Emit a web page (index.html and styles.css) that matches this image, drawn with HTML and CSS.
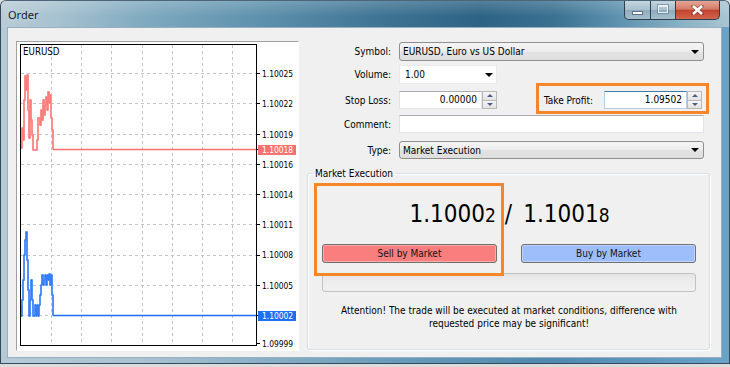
FILE: index.html
```html
<!DOCTYPE html>
<html>
<head>
<meta charset="utf-8">
<title>Order</title>
<link rel="stylesheet" href="styles.css">
</head>
<body>
<div class="window">
  <div class="titlebar">
    <span class="title">Order</span>
    <div class="caption">
      <div class="cbtn min"><span class="min-glyph"></span></div>
      <div class="cbtn max"><span class="max-glyph"></span></div>
      <div class="cbtn close">
        <svg width="13" height="10" viewBox="0 0 13 10"><path d="M2 1 L11 9 M11 1 L2 9" stroke="#3a2a28" stroke-width="4" stroke-linecap="square" opacity="0.35"/><path d="M2 1 L11 9 M11 1 L2 9" stroke="#ffffff" stroke-width="2.4"/></svg>
      </div>
    </div>
  </div>
  <div class="client">
    <div class="chart-panel">
      <svg class="chart" width="281" height="308" viewBox="17 42 281 308">
        <rect x="17" y="42" width="281" height="308" fill="#ffffff"/>
        <g stroke="#c4c4c4" stroke-width="1" stroke-dasharray="3 3" fill="none">
          <path d="M51.5 45 V345 M81.5 45 V345 M111.5 45 V345 M142.5 45 V345 M172.5 45 V345 M202.5 45 V345 M232.5 45 V345"/>
          <path d="M21 73.5 H256 M21 103.5 H256 M21 134.5 H256 M21 164.5 H256 M21 194.5 H256 M21 224.5 H256 M21 255.5 H256 M21 285.5 H256 M21 315.5 H256"/>
        </g>
        <path stroke="#000" stroke-width="1" fill="none" d="M256 73.5 H260 M256 103.5 H260 M256 134.5 H260 M256 149.5 H260 M256 164.5 H260 M256 194.5 H260 M256 224.5 H260 M256 255.5 H260 M256 285.5 H260 M256 315.5 H260 M256 343.5 H260"/>
        <path fill="none" stroke="#ffb4b4" stroke-width="2" d="M21 138 V148 H22 V128 H23 V140 H24 V100 H25 V76 H26 V90 H27 V75 H28 V110 H29 V138 H30 V100 H31 V120 H32 V135 H33 V150 H37 V140 H38 V118 H40 V125 H41 V110 H42 V120 H43 V100 H44 V115 H45 V105 H46 V97 H47 V110 H48 V92 H49 V103 H50 V95 H51 V118 H52 V130 H53 V149.5"/>
        <path fill="none" stroke="#ff6a6a" stroke-width="1" d="M21 138 V148 H22 V128 H23 V140 H24 V100 H25 V76 H26 V90 H27 V75 H28 V110 H29 V138 H30 V100 H31 V120 H32 V135 H33 V150 H37 V140 H38 V118 H40 V125 H41 V110 H42 V120 H43 V100 H44 V115 H45 V105 H46 V97 H47 V110 H48 V92 H49 V103 H50 V95 H51 V118 H52 V130 H53 V149.5"/>
        <line x1="53" y1="149.5" x2="257" y2="149.5" stroke="#ff7070" stroke-width="1.3"/>
        <path fill="none" stroke="#8ab6ff" stroke-width="2" d="M21 305 V316 H22 V300 H23 V280 H24 V255 H25 V240 H26 V232 H27 V260 H28 V290 H29 V316 H30 V300 H31 V280 H32 V300 H33 V316 H35 V305 H36 V316 H37 V305 H38 V316 H39 V305 H40 V295 H41 V285 H42 V275 H43 V285 H44 V280 H45 V275 H46 V285 H47 V275 H48 V280 H49 V274 H50 V285 H51 V275 H52 V295 H53 V315.5"/>
        <path fill="none" stroke="#1a6cf0" stroke-width="1" d="M21 305 V316 H22 V300 H23 V280 H24 V255 H25 V240 H26 V232 H27 V260 H28 V290 H29 V316 H30 V300 H31 V280 H32 V300 H33 V316 H35 V305 H36 V316 H37 V305 H38 V316 H39 V305 H40 V295 H41 V285 H42 V275 H43 V285 H44 V280 H45 V275 H46 V285 H47 V275 H48 V280 H49 V274 H50 V285 H51 V275 H52 V295 H53 V315.5"/>
        <line x1="53" y1="315.5" x2="257" y2="315.5" stroke="#1a6cf0" stroke-width="1.3"/>
        <rect x="20.5" y="44.5" width="236" height="301" fill="none" stroke="#000" stroke-width="1"/>
        <text class="sym" x="23" y="55">EURUSD</text>
        <g class="axis">
          <text x="262" y="76.5">1.10025</text>
          <text x="262" y="107">1.10022</text>
          <text x="262" y="137.5">1.10019</text>
          <text x="262" y="167.5">1.10016</text>
          <text x="262" y="197.5">1.10014</text>
          <text x="262" y="227.5">1.10011</text>
          <text x="262" y="258">1.10008</text>
          <text x="262" y="288.5">1.10005</text>
          <text x="262" y="346.5">1.09999</text>
        </g>
        <rect x="258" y="145" width="38" height="10" fill="#f87272"/>
        <text class="axis-hl" x="262" y="153">1.10018</text>
        <rect x="258" y="311" width="38" height="10" fill="#1d70f2"/>
        <text class="axis-hl" x="262" y="319">1.10002</text>
      </svg>
    </div>
    <div class="form-side">
      <div class="row r-symbol">
        <label class="lbl">Symbol:</label>
        <div class="combo combo-wide"><span>EURUSD, Euro vs US Dollar</span><span class="arrow"></span></div>
      </div>
      <div class="row r-volume">
        <label class="lbl">Volume:</label>
        <div class="edit-combo"><span>1.00</span><span class="arrow"></span></div>
      </div>
      <div class="row r-sl">
        <label class="lbl">Stop Loss:</label>
        <div class="spin-field">
          <div class="edit num">0.00000</div>
          <div class="spin"><span class="up"></span><span class="down"></span></div>
        </div>
        <div class="tp-box">
          <label class="tp-lbl">Take Profit:</label>
          <div class="spin-field">
            <div class="edit num focus">1.09502</div>
            <div class="spin"><span class="up"></span><span class="down"></span></div>
          </div>
        </div>
      </div>
      <div class="row r-comment">
        <label class="lbl">Comment:</label>
        <div class="edit edit-wide"></div>
      </div>
      <div class="row r-type">
        <label class="lbl">Type:</label>
        <div class="combo combo-wide"><span>Market Execution</span><span class="arrow"></span></div>
      </div>
      <fieldset class="group">
        <legend>Market Execution</legend>
        <div class="prices">
          <span class="big">1.1000</span><span class="small">2</span><span class="slash">/</span><span class="big">1.1001</span><span class="small">8</span>
        </div>
        <div class="buttons">
          <div class="btn sell">Sell by Market</div>
          <div class="btn buy">Buy by Market</div>
        </div>
        <div class="progress"></div>
        <p class="attention">Attention! The trade will be executed at market conditions, difference with<br>requested price may be significant!</p>
        <div class="sell-mark"></div>
      </fieldset>
    </div>
  </div>
</div>
</body>
</html>
```
FILE: styles.css
```css
* { box-sizing: border-box; }
html, body { margin: 0; padding: 0; }
body {
  width: 730px;
  height: 367px;
  overflow: hidden;
  background: #d9dde0;
  font-family: "DejaVu Sans Condensed", "DejaVu Sans", sans-serif;
  font-stretch: condensed;
  font-size: 10px;
  color: #000;
}
.window {
  width: 730px;
  height: 364px;
  border: 1px solid #34495a;
  border-top-color: #4d6576;
  border-radius: 6px 6px 0 0;
  background: linear-gradient(to right, #b6cad5 0%, #a9c2d0 20%, #6f9fbb 50%, #4f89ad 75%, #6aa3c8 100%);
  display: flex;
  flex-direction: column;
}
.titlebar {
  height: 26px;
  display: flex;
  align-items: flex-start;
  background:
    linear-gradient(to bottom, rgba(255,255,255,0.18), rgba(255,255,255,0) 60%),
    linear-gradient(to right, #b9ccd6 0%, #a6c1cf 8%, #7fa9bf 20%, #5f92ad 35%, #3f7494 52%, #2d6384 66%, #3b7191 76%, #5a8fac 84%, #8cb2c5 94%, #aac5d3 100%);
  border-radius: 5px 5px 0 0;
}
.title {
  font-family: "Noto Sans", "Liberation Sans", sans-serif;
  font-stretch: normal;
  font-size: 11px;
  color: #14202a;
  padding: 6px 0 0 7px;
  text-shadow: 0 0 6px rgba(255,255,255,0.6);
}
.caption {
  display: flex;
  margin-left: auto;
  margin-right: 9px;
}
.cbtn {
  height: 19px;
  border: 1px solid #2c3f4e;
  border-top: none;
  display: flex;
  align-items: center;
  justify-content: center;
}
.min {
  width: 27px;
  border-radius: 0 0 0 5px;
  background: linear-gradient(to bottom, #c4d5df 0%, #a9c0ce 48%, #8fabbd 52%, #a5bfcd 100%);
}
.max {
  width: 25px;
  border-left: none;
  background: linear-gradient(to bottom, #c4d5df 0%, #a9c0ce 48%, #8fabbd 52%, #a5bfcd 100%);
}
.close {
  width: 44px;
  border-left: none;
  border-radius: 0 0 5px 0;
  background: linear-gradient(to bottom, #e7a595 0%, #d67a66 45%, #c2442e 52%, #d4654e 100%);
}
.min-glyph {
  width: 11px;
  height: 4px;
  margin-top: 6px;
  background: #fff;
  border: 1px solid #5d7385;
}
.max-glyph {
  width: 10px;
  height: 8px;
  margin-top: -2px;
  border: 1px solid #e9f0f4;
  border-top-width: 2px;
  box-shadow: 0 0 0 1px rgba(70,95,115,0.45);
}
.client {
  margin: 0 7px 0 6px;
  height: 331px;
  border: 1px solid #96b0c2;
  background: #f0f0f0;
  display: flex;
  align-items: flex-start;
}
.chart-panel {
  margin: 13px 0 0 8px;
  width: 283px;
  height: 310px;
  border: 1px solid;
  border-color: #a0a0a0 #ffffff #ffffff #a0a0a0;
  background: #fff;
}
.chart { display: block; }
.chart text {
  font-family: "DejaVu Sans Condensed", "DejaVu Sans", sans-serif;
  font-stretch: condensed;
}
.chart .sym { font-size: 9.7px; fill: #000; }
.chart .axis text { font-size: 8.4px; fill: #000; }
.chart .axis-hl { font-size: 8.4px; fill: #fff; }
.form-side {
  flex: 1;
  padding-top: 14px;
  display: flex;
  flex-direction: column;
}
.row {
  display: flex;
  align-items: center;
}
.r-symbol { height: 19px; }
.r-volume { height: 19px; margin-top: 4px; }
.r-sl { height: 18px; margin-top: 7px; }
.r-comment { height: 18px; margin-top: 6px; }
.r-type { height: 18px; margin-top: 8px; }
.lbl {
  width: 92px;
  text-align: right;
  margin-right: 8px;
  flex: none;
}
.combo {
  height: 100%;
  display: flex;
  align-items: center;
  padding-left: 3px;
  border: 1px solid #8e8f8f;
  border-radius: 3px;
  background: linear-gradient(to bottom, #f5f5f5 0%, #ececec 50%, #e3e3e3 51%, #dedede 100%);
}
.combo-wide { width: 305px; }
.arrow {
  margin-left: auto;
  margin-right: 4px;
  width: 0;
  height: 0;
  border-left: 4px solid transparent;
  border-right: 4px solid transparent;
  border-top: 4px solid #000;
}
.edit-combo {
  width: 98px;
  height: 100%;
  display: flex;
  align-items: center;
  padding-left: 5px;
  background: #fff;
  border: 1px solid #eaeaea;
}
.edit-combo .arrow { margin-right: 3px; }
.edit {
  height: 100%;
  background: #fff;
  border: 1px solid #e2e3ea;
  border-top-color: #abadb3;
}
.edit-wide { width: 305px; }
.spin-field {
  display: flex;
  height: 18px;
}
.edit.num {
  width: 83px;
  text-align: right;
  padding-right: 4px;
  line-height: 16px;
}
.edit.focus {
  border-color: #b5cfe7;
  border-top-color: #3d7bad;
  padding-right: 4px;
}
.spin {
  width: 15px;
  display: flex;
  flex-direction: column;
}
.spin span {
  flex: 1;
  border: 1px solid #b8b8b8;
  background: linear-gradient(to bottom, #f5f5f5, #e2e2e2);
  display: flex;
  align-items: center;
  justify-content: center;
}
.spin span + span { border-top: none; }
.spin .up::after {
  content: "";
  border-left: 3px solid transparent;
  border-right: 3px solid transparent;
  border-bottom: 3px solid #4a5f8a;
}
.spin .down::after {
  content: "";
  border-left: 3px solid transparent;
  border-right: 3px solid transparent;
  border-top: 3px solid #4a5f8a;
}
.tp-box {
  margin: -8px 0 -5px 39px;
  width: 173px;
  height: 31px;
  border: 3px solid #f7862b;
  padding: 5px 0 2px 5px;
  display: flex;
  align-items: center;
}
.tp-lbl { width: 52px; margin-right: 8px; }
.tp-box .spin-field { width: 99px; }
.group {
  position: relative;
  margin: 8px 0 0 8px;
  width: 403px;
  height: 183px;
  border: 1px solid #d5dfe5;
  border-radius: 3px;
  box-shadow: inset 1px 1px 0 #fff, 1px 1px 0 #fff;
  padding: 19px 13px 0 14px;
  min-width: 0;
}
.group legend {
  margin-left: -9px;
  padding: 0 2px;
  line-height: 13px;
}
.prices {
  height: 30px;
  display: flex;
  justify-content: center;
  align-items: baseline;
  line-height: 30px;
  padding-left: 1px;
}
.big { font-size: 24px; }
.small { font-size: 19px; }
.slash { font-size: 24px; margin: 0 11px 0 9px; }
.buttons {
  margin-top: 15px;
  display: flex;
  justify-content: space-between;
}
.btn {
  width: 175px;
  height: 19px;
  border: 1px solid #707070;
  border-radius: 3px;
  box-shadow: inset 0 0 0 1px rgba(255,255,255,0.35);
  text-align: center;
  line-height: 17px;
  color: #141414;
}
.sell { background: #fa7e7e; }
.buy { background: #9ebefb; }
.progress {
  margin-top: 10px;
  height: 19px;
  border: 1px solid #c2c2c2;
  border-radius: 3px;
  background: linear-gradient(to bottom, #e4e4e4, #ededed 40%, #f0f0f0);
}
.attention {
  margin: 12px 0 0;
  text-align: center;
  line-height: 13px;
}
.sell-mark {
  position: absolute;
  left: 6px;
  top: 3px;
  width: 190px;
  height: 93px;
  border: 3px solid #f7862b;
}
```
